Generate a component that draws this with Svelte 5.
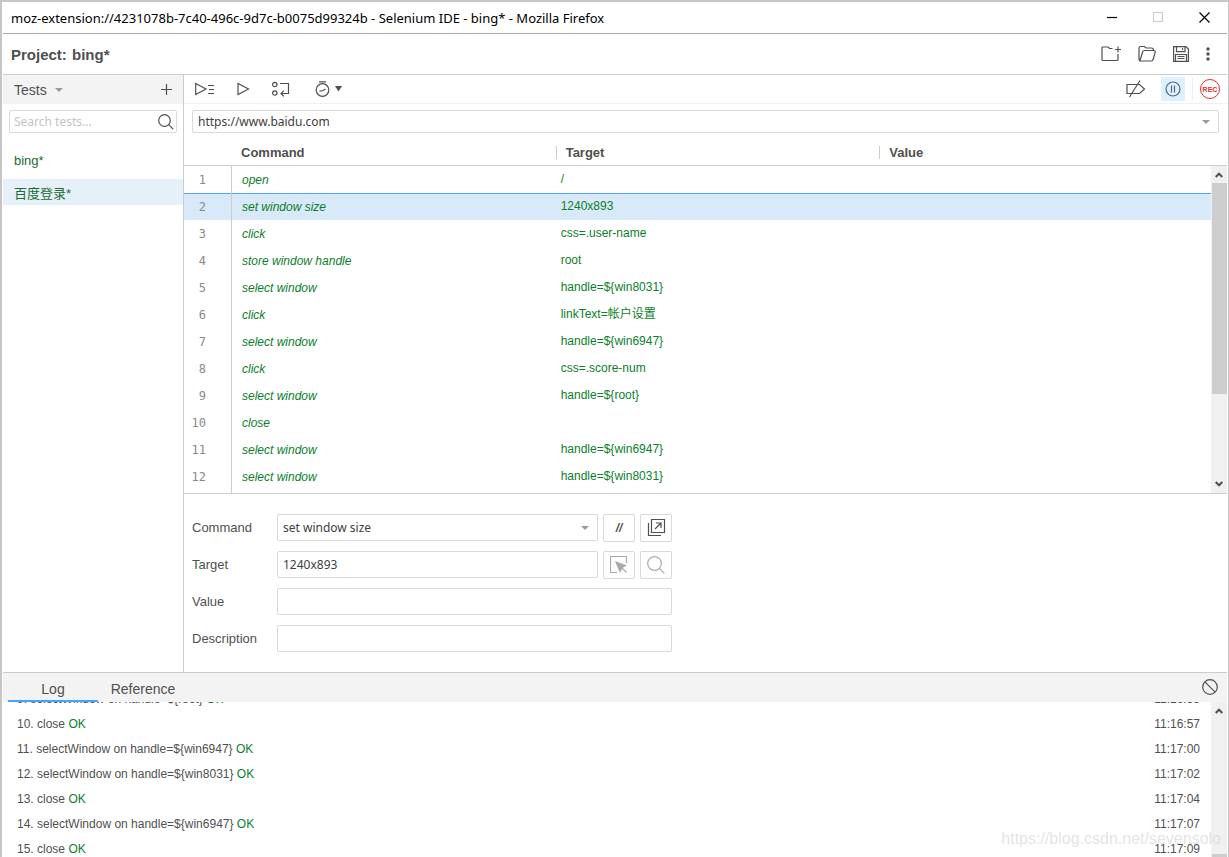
<script>
    /** Recorded steps of the selected test. */
    const steps = [
        { command: "open", target: "/" },
        { command: "set window size", target: "1240x893" },
        { command: "click", target: "css=.user-name" },
        { command: "store window handle", target: "root" },
        { command: "select window", target: "handle=${win8031}" },
        { command: "click", target: "linkText=帐户设置" },
        { command: "select window", target: "handle=${win6947}" },
        { command: "click", target: "css=.score-num" },
        { command: "select window", target: "handle=${root}" },
        { command: "close", target: "" },
        { command: "select window", target: "handle=${win6947}" },
        { command: "select window", target: "handle=${win8031}" }
    ];

    const log = [
        { text: "9. selectWindow on handle=${root}", time: "11:16:55" },
        { text: "10. close", time: "11:16:57" },
        { text: "11. selectWindow on handle=${win6947}", time: "11:17:00" },
        { text: "12. selectWindow on handle=${win8031}", time: "11:17:02" },
        { text: "13. close", time: "11:17:04" },
        { text: "14. selectWindow on handle=${win6947}", time: "11:17:07" },
        { text: "15. close", time: "11:17:09" }
    ];

    const tests = ["bing*", "百度登录*"];
    const commands = [...new Set(steps.map((s) => s.command))];

    let selectedTest = $state(1);
    let selected = $state(1);
    let tab = $state("Log");
    let value = $state("");
    let description = $state("");
</script>

{#snippet caret()}
    <svg class="caret" width="8" height="4" viewBox="0 0 8 4" aria-hidden="true"><path d="M0 0h8L4 4z" fill="#9b9b9b" /></svg>
{/snippet}

{#snippet arrow(d)}
    <svg class="arrow" width="8" height="6" viewBox="0 0 8 6" aria-hidden="true"><path {d} fill="none" stroke="#505050" stroke-width="2" /></svg>
{/snippet}

<div class="window">
    <header class="titlebar">
        <span class="caption">moz-extension://4231078b-7c40-496c-9d7c-b0075d99324b - Selenium IDE - bing* - Mozilla Firefox</span>
        <button aria-label="Minimize"><svg width="11" height="11" viewBox="0 0 11 11"><path d="M0 5.5h10" stroke="#000" /></svg></button>
        <button aria-label="Maximize" disabled><svg width="11" height="11" viewBox="0 0 11 11"><path d="M.5.5h9v9h-9z" fill="none" stroke="#ccc" /></svg></button>
        <button aria-label="Close"><svg width="11" height="11" viewBox="0 0 11 11"><path d="M.5.5l10 10M10.5.5l-10 10" stroke="#000" /></svg></button>
    </header>

    <div class="project">
        <h1>Project: <span>bing*</span></h1>
        <button aria-label="New project">
            <svg width="20" height="18" viewBox="0 0 20 18"><path d="M11.5 3.500H8.500L7 2H2Q1 2 1 3v11.500q0 1 1 1h14q1 0 1-1V9M14 4.500h6M17 1.500v6" /></svg>
        </button>
        <button aria-label="Open project">
            <svg width="18" height="18" viewBox="0 0 18 18"><path d="M3 16Q1 16 1 14V3.500Q1 1.500 2.500 1.500h4L8 3h5.500q2 0 2 2.500M2 15.500L4.600 7q.4-1.500 1.700-1.500h9.700q1.500 0 1.200 1.300L15.300 14q-.5 2-2 2H3" /></svg>
        </button>
        <button aria-label="Save project">
            <svg width="16" height="16" viewBox="0 0 16 16"><path d="M.6.6h12.400l2.400 2.400v12.400H.6zM3.500.6v5h8.500v-5M9.500 2v2M2.500 15.500v-7h11v7M4.500 10.500h7M4.500 12.500h7" /></svg>
        </button>
        <button aria-label="More options">
            <svg width="4" height="14" viewBox="0 0 4 14" class="solid"><circle cx="2" cy="2" r="1.700" /><circle cx="2" cy="7" r="1.700" /><circle cx="2" cy="12" r="1.700" /></svg>
        </button>
    </div>

    <div class="workspace">
        <aside>
            <div class="tests-head">
                <button class="tests-menu">Tests {@render caret()}</button>
                <button aria-label="Add new test"><svg width="11" height="11" viewBox="0 0 11 11"><path d="M0 5.500h11M5.500 0v11" /></svg></button>
            </div>
            <div class="search">
                <input type="search" placeholder="Search tests..." aria-label="Search tests" />
                <svg width="16" height="16" viewBox="0 0 16 16" aria-hidden="true"><circle cx="6.500" cy="6.500" r="5.800" /><path d="M10.700 10.700l4.500 4.500" /></svg>
            </div>
            <ul class="tests">
                {#each tests as test, i}
                    <li><button class:active={i === selectedTest} onclick={() => (selectedTest = i)}>{test}</button></li>
                {/each}
            </ul>
        </aside>

        <main>
            <div class="toolbar">
                <button aria-label="Run all tests">
                    <svg width="20" height="14" viewBox="0 0 20 14"><path d="M.7 1.500v11L11 7zM13 3.500h6M14 7.500h5M13 11.500h6" /></svg>
                </button>
                <button aria-label="Run current test">
                    <svg width="13" height="14" viewBox="0 0 13 14"><path d="M1 1.500v11L11.500 7z" /></svg>
                </button>
                <button aria-label="Step over">
                    <svg width="18" height="16" viewBox="0 0 18 16"><circle cx="2.800" cy="3.500" r="2.200" /><circle cx="2.800" cy="12" r="2.200" /><path d="M8 2.500h8.500v10H9M11.800 9.700L9 12.500l2.800 2.800" /></svg>
                </button>
                <button class="speed" aria-label="Test execution speed">
                    <svg width="15" height="16" viewBox="0 0 15 16"><circle cx="7.500" cy="9" r="6.300" /><path d="M4 .8h7M4.500 9.800l2.500.2 3.500-2" /></svg>
                    <svg class="solid" width="7" height="6" viewBox="0 0 7 6"><path d="M0 0h7L3.500 5.500z" /></svg>
                </button>
                <span class="spacer"></span>
                <button aria-label="Disable breakpoints">
                    <svg width="20" height="18" viewBox="0 0 20 18"><path d="M1 4.500h12.500L18.500 9l-5 4.500H1zM3.500 17L14 .5" /></svg>
                </button>
                <button class="pause" aria-label="Pause on exceptions">
                    <svg width="16" height="16" viewBox="0 0 16 16"><circle cx="8" cy="8" r="7" /><path d="M6.500 4.500v7M9.500 4.500v7" /></svg>
                </button>
                <span class="separator"></span>
                <button class="rec" aria-label="Start recording">REC</button>
            </div>

            <div class="url combo">
                <select aria-label="Playback base URL"><option>https://www.baidu.com</option></select>
                {@render caret()}
            </div>

            <div class="steps">
                <table>
                    <thead>
                        <tr><th aria-label="Step"></th><th>Command</th><th>Target</th><th>Value</th></tr>
                    </thead>
                    <tbody>
                        {#each steps as step, i}
                            <tr class:selected={i === selected} onclick={() => (selected = i)}>
                                <td class="index">{i + 1}</td>
                                <td class="command">{step.command}</td>
                                <td class="target">{step.target}</td>
                                <td></td>
                            </tr>
                        {/each}
                    </tbody>
                </table>
                <div class="scrollbar">
                    {@render arrow("M.7 5L4 1.700 7.300 5")}
                    <div class="thumb"></div>
                    {@render arrow("M.7 1L4 4.300 7.300 1")}
                </div>
            </div>

            <form>
                <div class="field">
                    <label for="command">Command</label>
                    <div class="combo">
                        <select id="command" value={steps[selected].command}>
                            {#each commands as command}
                                <option>{command}</option>
                            {/each}
                        </select>
                        {@render caret()}
                    </div>
                    <button type="button" class="tool comment" aria-label="Enable or disable command">//</button>
                    <button type="button" class="tool" aria-label="Add new window configuration">
                        <svg width="19" height="20" viewBox="0 0 19 20"><path d="M4.500 1.500h13v13h-13zM1.500 5v12.500h12.500M8 11l6-6M9 5h5v5" /></svg>
                    </button>
                </div>
                <div class="field">
                    <label for="target">Target</label>
                    <input id="target" value={steps[selected].target} />
                    <button type="button" class="tool faint" aria-label="Select target in page">
                        <svg width="18" height="18" viewBox="0 0 18 18"><path d="M7 16.500H.5V.5h16V7M11 11l5.500 5.500" /><path class="fill" d="M6 6l9.500 3.500-3.500 2L10 15.500z" /></svg>
                    </button>
                    <button type="button" class="tool faint" aria-label="Find target in page">
                        <svg width="18" height="18" viewBox="0 0 18 18"><circle cx="7.500" cy="7.500" r="6.800" /><path d="M12.300 12.300l5 5" /></svg>
                    </button>
                </div>
                <div class="field">
                    <label for="value">Value</label>
                    <input id="value" bind:value />
                </div>
                <div class="field">
                    <label for="description">Description</label>
                    <input id="description" bind:value={description} />
                </div>
            </form>
        </main>
    </div>

    <footer>
        <div class="tabs">
            {#each ["Log", "Reference"] as name}
                <button class:active={tab === name} onclick={() => (tab = name)}>{name}</button>
            {/each}
            <span class="spacer"></span>
            <button class="clear" aria-label="Clear log">
                <svg width="16" height="16" viewBox="0 0 16 16"><circle cx="8" cy="8" r="7.300" /><path d="M2.800 2.800l10.400 10.400" /></svg>
            </button>
        </div>
        <div class="log">
            <ul>
                {#each log as line}
                    <li><span>{line.text} <b>OK</b></span><time>{line.time}</time></li>
                {/each}
            </ul>
            <div class="scrollbar">
                {@render arrow("M.7 5L4 1.700 7.300 5")}
                <div class="thumb"></div>
            </div>
        </div>
    </footer>
    <div class="watermark">https://blog.csdn.net/sevensolo</div>
</div>

<style>
    :global(body) {
        margin: 0;
        background: #fff;
    }
    .window {
        position: relative;
        box-sizing: border-box;
        height: 100vh;
        display: flex;
        flex-direction: column;
        overflow: hidden;
        padding: 0 1px;
        border: solid #c6c6c6;
        border-width: 2px 1px 0 2px;
        color: #505050;
        font: 13px "Liberation Sans", "Noto Sans CJK SC", sans-serif;
    }
    button {
        display: flex;
        align-items: center;
        justify-content: center;
        padding: 0;
        border: 0;
        background: none;
        color: inherit;
        font: inherit;
    }
    input,
    select {
        box-sizing: border-box;
        min-width: 0;
        padding: 0 5px;
        border: 1px solid #d9d9d9;
        border-radius: 2px;
        background: #fff;
        color: #404040;
        font: 12px "Noto Sans", sans-serif;
        outline: none;
        appearance: none;
    }
    svg {
        flex: none;
        fill: none;
        stroke: #505050;
        stroke-width: 1.2;
    }
    svg.solid {
        fill: #505050;
        stroke: none;
    }
    svg.caret,
    svg.arrow {
        stroke: none;
    }
    ul {
        margin: 0;
        padding: 0;
        list-style: none;
    }
    .spacer {
        flex: 1;
    }

    .titlebar {
        display: flex;
        align-items: center;
        height: 31px;
        border-bottom: 1px solid #aaa;
        color: #000;
        font: 13px "Noto Sans", sans-serif;
    }
    .caption {
        flex: 1;
        padding-left: 8px;
    }
    .titlebar button {
        width: 46px;
        height: 100%;
    }

    .project {
        display: flex;
        align-items: center;
        gap: 17px;
        height: 40px;
        padding: 0 17px 0 8px;
        border-bottom: 1px solid #ccc;
    }
    h1 {
        flex: 1;
        margin: 0;
        font-size: 15px;
    }
    h1 span {
        margin-left: 1px;
    }

    .workspace {
        flex: 1;
        min-height: 0;
        display: flex;
    }
    aside {
        width: 180px;
        border-right: 1px solid #ccc;
    }
    .tests-head {
        display: flex;
        justify-content: space-between;
        height: 29px;
        padding: 0 11px;
        background: #f3f3f3;
    }
    .tests-menu {
        gap: 8px;
        font-size: 14px;
    }
    .search {
        display: grid;
        align-items: center;
        margin: 6px;
    }
    .search > :global(*) {
        grid-area: 1 / 1;
    }
    .search input {
        height: 23px;
        padding: 0 4px;
    }
    .search input::placeholder {
        color: #c4c4c4;
    }
    .search svg {
        justify-self: end;
        margin-right: 3px;
        pointer-events: none;
    }
    .tests {
        padding-top: 8px;
    }
    .tests li {
        padding-bottom: 6px;
    }
    .tests button {
        justify-content: flex-start;
        width: 100%;
        height: 26px;
        padding-left: 11px;
        color: #1b6b33;
    }
    .tests button.active {
        background: #e6f0f8;
    }

    main {
        flex: 1;
        min-width: 0;
        display: flex;
        flex-direction: column;
    }
    .toolbar {
        display: flex;
        align-items: center;
        gap: 22px;
        height: 28px;
        padding: 0 7px 0 11px;
        border-bottom: 1px solid #f0f0f0;
    }
    .speed {
        gap: 5px;
        margin-left: 3px;
    }
    .pause {
        width: 24px;
        height: 24px;
        margin-left: -7px;
        background: #def0fe;
    }
    .pause svg {
        stroke: #4a6a8a;
    }
    .separator {
        width: 1px;
        height: 22px;
        margin: 0 -15px;
        background: #eee;
    }
    .rec {
        box-sizing: border-box;
        width: 20px;
        height: 20px;
        border: 1px solid #ea2f2f;
        border-radius: 50%;
        color: #ea2f2f;
        font-size: 7px;
        font-weight: bold;
    }
    .combo {
        display: grid;
        align-items: center;
    }
    .combo > :global(*) {
        grid-area: 1 / 1;
    }
    .combo :global(.caret) {
        justify-self: end;
        margin-right: 9px;
        pointer-events: none;
    }
    .url {
        margin: 6px 8px;
    }
    .url select {
        height: 23px;
    }

    .steps {
        flex: 1;
        min-height: 0;
        display: flex;
        overflow: hidden;
        border-bottom: 1px solid #ccc;
    }
    table {
        flex: 1;
        display: flex;
        flex-direction: column;
    }
    thead,
    tbody {
        display: block;
    }
    /* the gutter runs on below the last row */
    tbody {
        flex: 1;
        background: linear-gradient(#ccc, #ccc) 47px 0 / 1px 100% no-repeat;
    }
    tr {
        display: grid;
        grid-template-columns: 48px repeat(3, 1fr);
        align-items: center;
        box-sizing: border-box;
        height: 27px;
        padding-right: 8px;
    }
    thead tr {
        border-bottom: 1px solid #ccc;
    }
    th {
        padding: 1px 9px 0;
        text-align: left;
        line-height: 12px;
    }
    th:nth-child(n + 3) {
        border-left: 1px solid #ccc;
    }
    td {
        padding: 0;
        color: #0b7f2c;
        font-size: 12px;
        line-height: 26px;
    }
    tr.selected {
        background: #d8eaf9;
        box-shadow: inset 0 1px #4fa8f2;
    }
    td.index {
        box-sizing: border-box;
        height: 27px;
        padding-right: 25px;
        border-right: 1px solid #ccc;
        color: #8a8a8a;
        font: 12px/29px "DejaVu Sans Mono", monospace;
        text-align: right;
    }
    td.command {
        padding-left: 10px;
        font-style: italic;
    }
    td.target {
        padding-left: 5px;
        line-height: 24px;
        padding-bottom: 2px;
    }
    .scrollbar {
        display: flex;
        flex-direction: column;
        align-items: center;
        justify-content: space-between;
        box-sizing: border-box;
        width: 16px;
        padding: 6px 0;
        background: #f0f0f0;
    }
    .thumb {
        width: 15px;
        background: #cdcdcd;
    }
    .steps .scrollbar {
        margin-top: 26px;
        border-top: 1px solid #ccc;
    }
    .steps .thumb {
        height: 67%;
        margin: 5px 0 auto;
    }

    form {
        display: flex;
        flex-direction: column;
        gap: 10px;
        width: 480px;
        padding: 20px 8px;
    }
    .field {
        display: flex;
        gap: 5px;
        height: 27px;
    }
    .field label {
        width: 80px;
        line-height: 27px;
    }
    .field input,
    .field .combo {
        flex: 1;
    }
    .field select {
        height: 27px;
    }
    .tool {
        box-sizing: border-box;
        width: 32px;
        height: 28px;
        border: 1px solid #d9d9d9;
        border-radius: 2px;
    }
    .comment {
        font-size: 12px;
        font-style: italic;
        font-weight: bold;
    }
    .faint svg {
        stroke: #aaa;
    }
    .fill {
        fill: #aaa;
    }

    footer {
        height: 185px;
        display: flex;
        flex-direction: column;
        box-sizing: border-box;
        border-top: 1px solid #ccc;
    }
    .tabs {
        display: flex;
        height: 29px;
        padding: 0 9px 0 5px;
        background: #f3f3f3;
    }
    .tabs button {
        box-sizing: border-box;
        width: 90px;
        padding-top: 4px;
        border-bottom: 2px solid transparent;
        font-size: 14px;
    }
    .tabs button.active {
        border-color: #40a6ff;
    }
    .tabs .clear {
        width: 16px;
        padding: 0;
    }
    .log {
        flex: 1;
        min-height: 0;
        display: flex;
        overflow: hidden;
    }
    /* list is scrolled part of the way through its first row */
    .log ul {
        flex: 1;
        margin-top: -15px;
        padding: 0 11px 0 14px;
    }
    .log li {
        display: flex;
        justify-content: space-between;
        font-size: 12px;
        line-height: 25px;
    }
    .log b {
        color: #0b7f2c;
        font-weight: normal;
    }
    .log .scrollbar {
        padding-bottom: 0;
    }
    .log .thumb {
        height: 3px;
    }
    .watermark {
        position: absolute;
        right: 7px;
        bottom: 9px;
        color: rgba(215, 215, 215, 0.7);
        font-size: 16px;
        pointer-events: none;
    }
</style>
